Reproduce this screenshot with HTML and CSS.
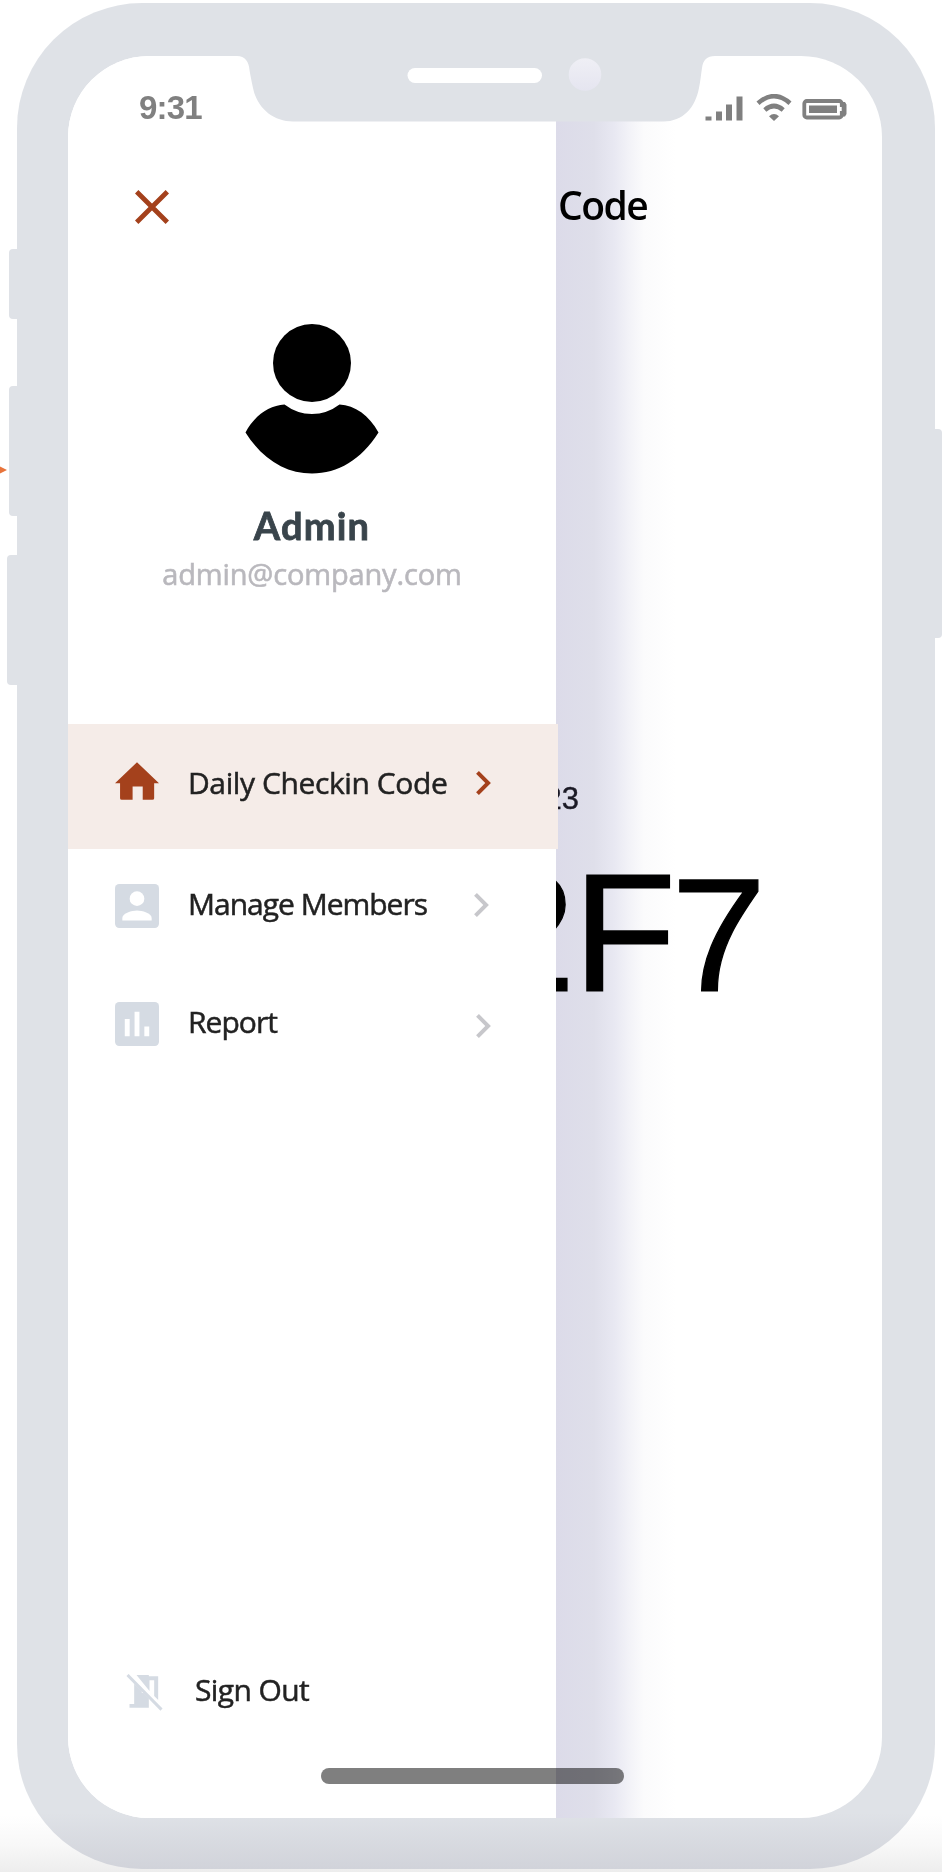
FILE: index.html
```
<!DOCTYPE html>
<html lang="en">
<head>
<meta charset="utf-8">
<title>Daily Checkin Code</title>
<link rel="stylesheet" href="styles.css">
</head>
<body>
<svg class="arrow" viewBox="0 0 7 8"><path d="M0 .5 7 4 0 7.5z" fill="#e8743b"/></svg>
<span class="key key-mute"></span>
<span class="key key-up"></span>
<span class="key key-down"></span>
<span class="key key-power"></span>
<div class="phone">
  <div class="screen">
    <main class="page">
      <h1 class="page-title">Code</h1>
      <p class="date">23</p>
      <p class="code"><span class="c2">2</span><span class="cf">F</span><span class="c7">7</span></p>
    </main>
    <div class="shade"></div>
    <aside class="drawer">
      <header class="drawer-head">
        <svg class="close" viewBox="0 0 34 34"><path d="M1.700 1.700 32.300 32.300M32.300 1.700 1.700 32.300" stroke="#a4411c" stroke-width="4.800"/></svg>
      </header>
      <section class="profile">
        <svg class="avatar" viewBox="0 0 134 150"><circle cx="67" cy="39" r="39"/><path d="M.5 108.500C10 91 24 81.500 39.500 80.500Q52 90 67 90T94.500 80.500C110 81.500 124 91 133.500 108.500C116 136 93 149.500 67 149.500S18 136 .5 108.500z"/></svg>
        <h2 class="name">Admin</h2>
        <p class="email">admin@company.com</p>
      </section>
      <nav class="menu">
        <a class="item active">
          <svg class="home" viewBox="2 3 20 17"><path d="M10 19.300V14h4.600v6H19q.8 0 .8-.7V12.500H22L12 3 2 12.500h2.300v6.800q0 .7.800.7H10z" fill="#a4411c"/></svg>
          <span class="label l-home">Daily Checkin Code</span>
          <svg class="chev" viewBox="8.590 6 7.410 12"><path d="M8.590 16.590 13.170 12 8.590 7.410 10 6l6 6-6 6z" fill="#a4411c"/></svg>
        </a>
        <a class="item members">
          <svg class="box" viewBox="3 3 18 18"><rect x="3" y="3" width="18" height="18" rx="1.700" fill="#d5dbe3"/><circle cx="12" cy="9" r="3" fill="#fff"/><path d="M6 17.900v-1c0-2 4-3.100 6-3.100s6 1.100 6 3.100v1z" fill="#fff"/></svg>
          <span class="label l-members">Manage Members</span>
          <svg class="chev" viewBox="8.590 6 7.410 12"><path d="M8.590 16.590 13.170 12 8.590 7.410 10 6l6 6-6 6z" fill="#c7c7cb"/></svg>
        </a>
        <a class="item report">
          <svg class="box" viewBox="3 3 18 18"><rect x="3" y="3" width="18" height="18" rx="1.700" fill="#d5dbe3"/><path d="M7 10h2v7H7zM11 7h2v10h-2zM15 13h2v4h-2z" fill="#fff"/></svg>
          <span class="label l-report">Report</span>
          <svg class="chev" viewBox="8.590 6 7.410 12"><path d="M8.590 16.590 13.170 12 8.590 7.410 10 6l6 6-6 6z" fill="#c7c7cb"/></svg>
        </a>
      </nav>
      <a class="item signout">
        <svg class="door" viewBox="80 102 110 111"><path fill="#d5dbe3" d="M111 105h37v4h28v71l-12-12v-47h-14v32zM104 131l44 44v28H90v-11h14z"/><path fill="#fff" d="M127 150h11v9h-11z"/><path d="M84 105 186 209" stroke="#d5dbe3" stroke-width="9"/></svg>
        <span class="label l-out">Sign Out</span>
      </a>
    </aside>
    <div class="indicator"></div>
    <div class="status">
      <span class="time">9:31</span>
      <svg class="glyphs" viewBox="0 0 144 28" fill="#808080">
        <path d="M.5 22.500h6v4h-6zM11 17.500h6v9h-6zM21 10.500h6v16h-6zM31.500 2.500h6v24h-6z"/>
        <path d="M53 9.200Q69 -4.800 85 9.200M59.800 16Q69 8 78.200 16" fill="none" stroke="#808080" stroke-width="4.600"/>
        <path d="M64 22.200Q69 17.600 74 22.200L69 27z"/>
        <rect x="99.300" y="7" width="37.500" height="16.500" rx="2.500" fill="none" stroke="#808080" stroke-width="3.800"/>
        <path d="M104 11.500h28v7.500h-28zM135 8h5l1.500 2.500v9.500l-1.500 2.500H135z"/><path fill="#fff" d="M133.200 13h3.500v4h-3.500z"/>
      </svg>
    </div>
    <svg class="notch" viewBox="234 55 484 67"><path d="M234 55v1h3c8 0 12 6 12.500 14 .8 5 2 11 3.500 18 4 20 20 33.500 40 33.500h370c20 0 32-13.500 36-33.500 1.500-7 2-14 3-20 1-8 5-12 13-12h3v-1z" fill="#dfe2e7"/><rect x="407.500" y="68" width="134.500" height="15" rx="7.500" fill="#fff"/><circle cx="585" cy="74.500" r="16.300" fill="url(#lens)"/><defs><linearGradient id="lens" x2="0" y2="1"><stop stop-color="#efeff5"/><stop offset="1" stop-color="#e5e5f0"/></linearGradient></defs></svg>
  </div>
</div>
</body>
</html>
```
FILE: styles.css
```
* { box-sizing: border-box; }
body {
  margin: 0;
  width: 942px;
  height: 1872px;
  padding: 3px 7px 3px 17px;
  position: relative;
  overflow: hidden;
  background: linear-gradient(#fff 1815px, #f8f8f8 1845px, #ededed 1872px);
  font-family: "Open Sans", "Noto Sans", sans-serif;
  color: #222;
}
h1, h2, p { margin: 0; }
svg { display: block; flex: none; }

.phone {
  position: relative;
  width: 918px;
  height: 1866px;
  padding: 53px 53px 51px 51px;
  border-radius: 125px;
  background: linear-gradient(#dfe2e7 1810px, #d1d3da 1866px);
}
.screen {
  position: relative;
  height: 1762px;
  border-radius: 81px;
  overflow: hidden;
  background: #fff;
}

/* hardware keys on the edge of the case */
.key { position: absolute; background: #dfe2e7; border-radius: 4px; }
.key-mute { left: 9px; top: 249px; width: 20px; height: 70px; }
.key-up { left: 9px; top: 386px; width: 20px; height: 130px; }
.key-down { left: 7px; top: 555px; width: 20px; height: 130px; }
.key-power { left: 922px; top: 429px; width: 20px; height: 209px; }
.arrow { position: absolute; left: 0; top: 465.5px; width: 7px; height: 8px; }

/* page behind the drawer */
.page { padding: 119px 0 0 490px; }
.page-title {
  height: 60px;
  line-height: 60px;
  font-size: 39px;
  font-weight: 600;
  letter-spacing: -1.5px;
  color: #000;
}
.date {
  margin: 544px 0 0 -13.5px;
  height: 40px;
  font: 31px/40px "Liberation Sans", Arial, sans-serif;
  color: #1e1c28;
  -webkit-text-stroke: .4px #1e1c28;
}
.code {
  display: flex;
  align-items: baseline;
  margin: 19px 0 0 -76.5px;
  height: 190px;
  font: 169px/190px "Liberation Sans", Arial, sans-serif;
  color: #000;
  -webkit-text-stroke: 1.2px #000;
}
.c2 { letter-spacing: -2.5px; }
.cf { letter-spacing: -5.4px; }
.c7 { font-size: 162px; transform: scaleX(1.06); transform-origin: left; }

.shade {
  position: absolute;
  left: 488px;
  top: 0;
  width: 130px;
  height: 1762px;
  background: linear-gradient(90deg, #dcdbe9, #dfdfea 38px, #e8e8f2 58px, #f3f3f8 74px, #fbfbfc 88px, #fff 120px);
  mix-blend-mode: multiply;
}

.drawer {
  position: absolute;
  left: 0;
  top: 0;
  width: 488px;
  height: 1762px;
  display: flex;
  flex-direction: column;
  background: #fff;
}
.drawer-head { height: 268px; padding: 134px 0 0 67px; }
.close { width: 34px; height: 34px; }
.profile {
  height: 400px;
  display: flex;
  flex-direction: column;
  align-items: center;
}
.avatar { width: 134px; height: 150px; }
.name {
  margin-top: 28px;
  height: 49px;
  font: bold 38px/46px Lato, sans-serif;
  letter-spacing: 1.2px;
  color: #39444b;
  -webkit-text-stroke: .8px #39444b;
}
.email {
  height: 46px;
  font-size: 29px;
  line-height: 46px;
  letter-spacing: -.15px;
  color: #b9b8bd;
  -webkit-text-stroke: .6px #b9b8bd;
}

.menu { display: flex; flex-direction: column; }
.item { display: flex; align-items: center; width: 488px; padding: 0 67px 0 47px; }
.active { width: 490px; height: 125px; padding-bottom: 7px; background: #f5ece8; }
.members { height: 117px; padding-bottom: 6px; }
.report { height: 118px; padding: 0 65px 4px 47px; }
.home { width: 44px; height: 38px; margin-top: -4px; }
.box { width: 44px; height: 44px; margin-top: 2px; }
.report .box { margin-top: 1px; }
.label {
  margin-left: 29px;
  font-size: 30px;
  line-height: 40px;
  white-space: nowrap;
  -webkit-text-stroke: .5px #222;
}
.l-home { letter-spacing: -.4px; }
.l-members { letter-spacing: -1px; margin-top: -2px; }
.l-report { letter-spacing: -.95px; margin-top: -2px; }
.chev { width: 15px; height: 24px; margin-left: auto; }
.report .chev { margin-top: 5px; }
.signout { margin-top: auto; height: 60px; margin-bottom: 96px; padding-left: 58px; }
.door { width: 37px; height: 37px; }
.l-out { margin: -4px 0 0 32px; letter-spacing: -.6px; }

.indicator {
  position: absolute;
  left: 253px;
  top: 1712px;
  width: 303px;
  height: 16px;
  border-radius: 8px;
  background: rgba(0, 0, 0, .5);
}
.status {
  position: absolute;
  left: 71px;
  top: 36px;
  width: 710px;
  height: 32px;
  display: flex;
  align-items: center;
  justify-content: space-between;
}
.time { font: bold 33px/32px "Liberation Sans", Arial, sans-serif; letter-spacing: -.8px; color: #808080; }
.glyphs { width: 144px; height: 28px; }
.notch { position: absolute; left: 166px; top: -1px; width: 484px; height: 67px; }
```
